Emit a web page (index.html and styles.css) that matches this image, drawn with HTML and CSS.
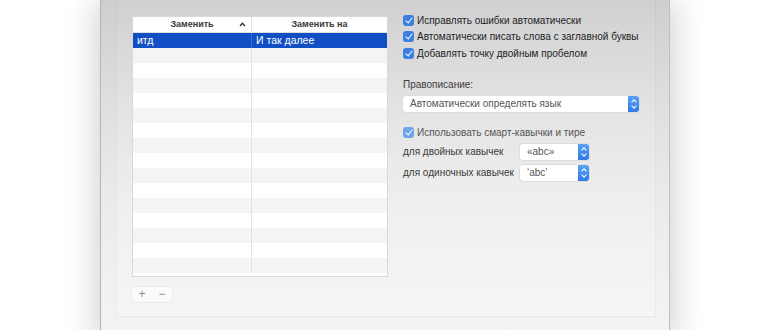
FILE: index.html
```html
<html>

<head>
    <title>Текст</title>
    <link rel="stylesheet" href="styles.css">
</head>

<body>
    <div id="desk">
        <div id="window">
            <div id="group">
                <div class="leftcol">
                    <div class="table">
                        <div class="thead">
                            <div class="th first">Заменить
                                <svg class="caret" width="7" height="5" viewBox="0 0 7 5"><path d="M1 4 L3.5 1.3 L6 4" fill="none" stroke="#333" stroke-width="1.3"/></svg>
                            </div>
                            <div class="th">Заменить на</div>
                        </div>
                        <div class="row selected"><div class="td first">итд</div><div class="td">И так далее</div></div>
                        <div class="row"><div class="td first"></div><div class="td"></div></div>
                        <div class="row"><div class="td first"></div><div class="td"></div></div>
                        <div class="row"><div class="td first"></div><div class="td"></div></div>
                        <div class="row"><div class="td first"></div><div class="td"></div></div>
                        <div class="row"><div class="td first"></div><div class="td"></div></div>
                        <div class="row"><div class="td first"></div><div class="td"></div></div>
                        <div class="row"><div class="td first"></div><div class="td"></div></div>
                        <div class="row"><div class="td first"></div><div class="td"></div></div>
                        <div class="row"><div class="td first"></div><div class="td"></div></div>
                        <div class="row"><div class="td first"></div><div class="td"></div></div>
                        <div class="row"><div class="td first"></div><div class="td"></div></div>
                        <div class="row"><div class="td first"></div><div class="td"></div></div>
                        <div class="row"><div class="td first"></div><div class="td"></div></div>
                        <div class="row"><div class="td first"></div><div class="td"></div></div>
                        <div class="row"><div class="td first"></div><div class="td"></div></div>
                    </div>
                    <div class="pm">
                        <span>+</span>
                        <span>&minus;</span>
                    </div>
                </div>

                <div class="rightcol">
                    <label class="check"><span class="box"></span>Исправлять ошибки автоматически</label>
                    <label class="check"><span class="box"></span>Автоматически писать слова с заглавной буквы</label>
                    <label class="check"><span class="box"></span>Добавлять точку двойным пробелом</label>

                    <p class="caption">Правописание:</p>
                    <div class="popup wide">
                        <span>Автоматически определять язык</span>
                        <span class="stepper"></span>
                    </div>

                    <label class="check smart"><span class="box"></span>Использовать смарт-кавычки и тире</label>
                    <div class="quoterow">
                        <span class="qlabel">для двойных кавычек</span>
                        <div class="popup small"><span>«abc»</span><span class="stepper"></span></div>
                    </div>
                    <div class="quoterow">
                        <span class="qlabel">для одиночных кавычек</span>
                        <div class="popup small"><span>‘abc’</span><span class="stepper"></span></div>
                    </div>
                </div>
            </div>
        </div>
    </div>
</body>

</html>
```

FILE: styles.css
```css
* {
    margin: 0;
    padding: 0;
    box-sizing: border-box;
}

body {
    width: 770px;
    height: 330px;
    overflow: hidden;
    background-color: white;
    font-family: 'Liberation Sans', 'Noto Sans', sans-serif;
    font-size: 10px;
    color: #2a2a2a;
}

#desk {
    display: flex;
    height: 330px;
    padding-left: 100px;
}

#window {
    width: 570px;
    height: 340px;
    background: linear-gradient(to bottom, #cecece 0px, #dddddd 90px, #ebebeb 200px, #f3f3f3 330px);
    border-left: 1px solid #b5b5b5;
    border-right: 1px solid #c0c0c0;
    box-shadow: -12px 0 24px rgba(0, 0, 0, 0.11), 12px 0 24px rgba(0, 0, 0, 0.11);
    padding-left: 15px;
}

#group {
    width: 540px;
    height: 317px;
    display: flex;
    gap: 15px;
    padding: 12px 0 0 15px;
    background: linear-gradient(to bottom, rgba(255,255,255,0.04), rgba(255,255,255,0.25));
    border: 1px solid rgba(0, 0, 0, 0.04);
    border-top: none;
}

.leftcol {
    width: 256px;
    padding-top: 4px;
}

.table {
    height: 261px;
    background-color: white;
    border: 1px solid #d8d8d8;
    overflow: hidden;
}

.thead, .row {
    display: flex;
}

.thead {
    height: 16px;
    background-color: white;
    border-bottom: 1px solid #dedede;
}

.th {
    flex: 1;
    font-size: 9px;
    font-weight: bold;
    color: #3a3a3a;
    text-align: center;
    line-height: 15px;
    position: relative;
}

.row {
    height: 15px;
}

.row:nth-child(even) {
    background-color: white;
}

.row:nth-child(odd) {
    background-color: #f4f4f4;
}

.td {
    flex: 1;
    line-height: 15px;
    padding-left: 4px;
    font-size: 10.5px;
}

.thead .first, .row .first {
    width: 119px;
    flex: none;
    border-right: 1px solid #e2e2e2;
}

.caret {
    position: absolute;
    right: 5px;
    top: 5px;
}

.selected {
    background-color: #1150c4 !important;
    color: white;
}

.selected .first {
    border-color: #3a6fd0 !important;
}

.pm {
    display: flex;
    width: 40px;
    height: 15px;
    margin-top: 10px;
    background-color: #fbfbfb;
    border-radius: 3px;
    box-shadow: 0 0 0 1px rgba(0,0,0,0.04);
    color: #8a8a8a;
    font-size: 12px;
    line-height: 14px;
}

.pm span {
    width: 20px;
    text-align: center;
}

.rightcol {
    display: flex;
    flex-direction: column;
    width: 240px;
}

.check {
    display: flex;
    align-items: center;
    height: 16.5px;
    white-space: nowrap;
    color: #1e1e1e;
}

.box {
    flex: none;
    width: 11px;
    height: 11px;
    margin-right: 3px;
    border-radius: 3px;
    background-color: #3b7fe0;
    position: relative;
}

.box::after {
    content: "";
    position: absolute;
    left: 3.5px;
    top: 1px;
    width: 3px;
    height: 6px;
    border: solid white;
    border-width: 0 1.6px 1.6px 0;
    transform: rotate(40deg);
}

.caption {
    margin-top: 15px;
    color: #3c3c3c;
    line-height: 16px;
}

.popup {
    display: flex;
    align-items: center;
    justify-content: space-between;
    height: 16px;
    background-color: white;
    border-radius: 3px;
    box-shadow: 0 0 0 1px #dcdcdc, 0 1px 1px rgba(0,0,0,0.05);
    color: #555;
    padding-left: 7px;
}

.wide {
    width: 236px;
    margin-top: 3px;
}

.stepper {
    flex: none;
    width: 11px;
    height: 16px;
    border-radius: 0 3px 3px 0;
    background: linear-gradient(to bottom, #5aa2f5, #2f7ae6);
    position: relative;
}

.stepper::before, .stepper::after {
    content: "";
    position: absolute;
    left: 3.5px;
    width: 3px;
    height: 3px;
    border: solid white;
    border-width: 1.2px 0 0 1.2px;
}

.stepper::before {
    top: 4px;
    transform: rotate(45deg);
}

.stepper::after {
    top: 8px;
    transform: rotate(225deg);
}

.smart {
    margin-top: 13px;
    color: #555;
}

.smart .box {
    background-color: #6fa3e8;
}

.quoterow {
    display: flex;
    align-items: center;
    height: 21px;
}

.qlabel {
    width: 117px;
    color: #3c3c3c;
    white-space: nowrap;
}

.small {
    width: 69px;
}
```
